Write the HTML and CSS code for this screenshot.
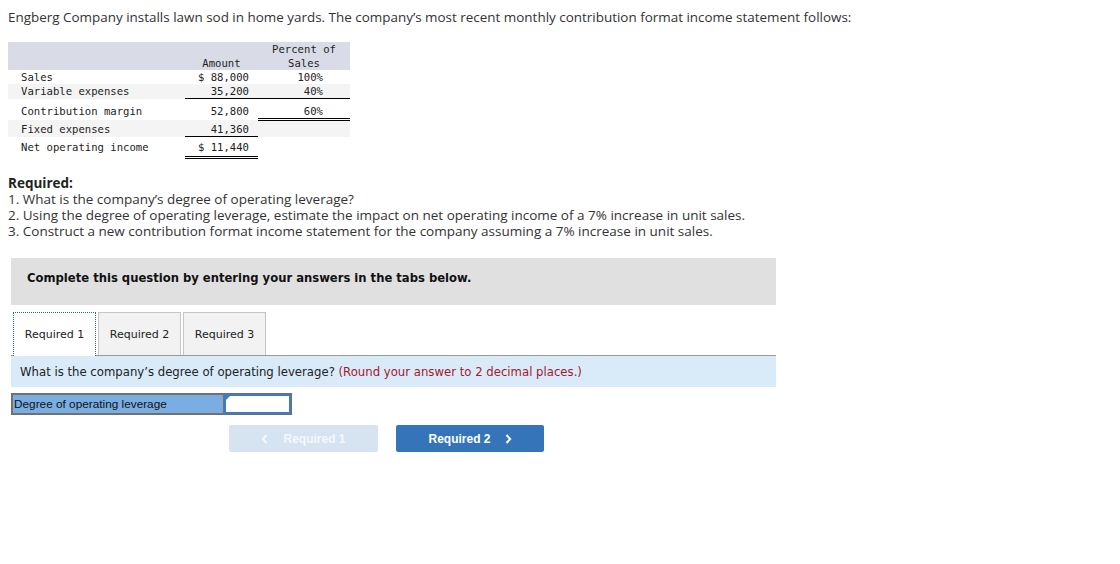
FILE: index.html
```html
<!DOCTYPE html>
<html>
<head>
<meta charset="utf-8">
<link rel="stylesheet" href="styles.css">
</head>
<body>
<p class="intro">Engberg Company installs lawn sod in home yards. The company’s most recent monthly contribution format income statement follows:</p>

<table class="stmt">
  <thead>
    <tr>
      <th class="c-label"></th>
      <th class="c-amt">Amount</th>
      <th class="c-pct">Percent of<br>Sales</th>
    </tr>
  </thead>
  <tbody>
    <tr class="r-sales">
      <td class="c-label">Sales</td>
      <td class="c-amt">$ 88,000</td>
      <td class="c-pct">100%</td>
    </tr>
    <tr class="r-var shade">
      <td class="c-label">Variable expenses</td>
      <td class="c-amt ul">35,200</td>
      <td class="c-pct ul">40%</td>
    </tr>
    <tr class="r-cm">
      <td class="c-label">Contribution margin</td>
      <td class="c-amt">52,800</td>
      <td class="c-pct dul">60%</td>
    </tr>
    <tr class="r-fixed shade">
      <td class="c-label">Fixed expenses</td>
      <td class="c-amt ul">41,360</td>
      <td class="c-pct"></td>
    </tr>
    <tr class="r-net">
      <td class="c-label">Net operating income</td>
      <td class="c-amt dul">$ 11,440</td>
      <td class="c-pct"></td>
    </tr>
  </tbody>
</table>

<div class="required">
  <div class="req-title">Required:</div>
  <div>1. What is the company’s degree of operating leverage?</div>
  <div>2. Using the degree of operating leverage, estimate the impact on net operating income of a 7% increase in unit sales.</div>
  <div>3. Construct a new contribution format income statement for the company assuming a 7% increase in unit sales.</div>
</div>

<div class="panel">
  <div class="banner">Complete this question by entering your answers in the tabs below.</div>

  <div class="tabs">
    <div class="tab active">Required 1</div>
    <div class="tab">Required 2</div>
    <div class="tab">Required 3</div>
  </div>

  <div class="question">What is the company’s degree of operating leverage? <span class="hint">(Round your answer to 2 decimal places.)</span></div>

  <div class="answer-row">
    <div class="answer-label">Degree of operating leverage</div>
    <div class="answer-input"><span class="marker"></span></div>
  </div>

  <div class="nav">
    <div class="btn btn-prev"><svg class="chev chev-l" width="7" height="10" viewBox="0 0 7 10"><path d="M5.5 1 L1.8 5 L5.5 9" fill="none" stroke="currentColor" stroke-width="2"/></svg>Required 1</div>
    <div class="btn btn-next">Required 2<svg class="chev chev-r" width="7" height="10" viewBox="0 0 7 10"><path d="M1.5 1 L5.2 5 L1.5 9" fill="none" stroke="currentColor" stroke-width="2"/></svg></div>
  </div>
</div>
</body>
</html>
```

FILE: styles.css
```css
html, body {
  margin: 0;
  padding: 0;
  background: #ffffff;
}

body {
  padding: 8px;
  font-family: "Open Sans", Lato, sans-serif;
  color: #333333;
}

.intro {
  margin: 0;
  font-size: 13.45px;
  line-height: 18px;
  color: #333333;
}

.stmt {
  margin-top: 16px;
  border-collapse: collapse;
  font-family: "DejaVu Sans Mono", "Liberation Mono", monospace;
  font-size: 10.6px;
  color: #222222;
}

.stmt thead tr {
  background: #d9dce6;
}

.stmt th {
  font-weight: normal;
  text-align: center;
  vertical-align: bottom;
  line-height: 14px;
  padding: 0;
  height: 28px;
}

.stmt td {
  padding: 0;
  line-height: 14px;
}

.c-label {
  width: 177px;
  box-sizing: border-box;
}

td.c-label {
  padding-left: 13px;
  text-align: left;
}

.c-amt {
  width: 73px;
  box-sizing: border-box;
}

td.c-amt {
  text-align: right;
  padding-right: 9px;
}

.c-pct {
  width: 92px;
  box-sizing: border-box;
}

td.c-pct {
  text-align: right;
  padding-right: 27px;
}

.shade {
  background: #f4f4f4;
}

.r-sales td { height: 14px; }
.r-var td { height: 14px; }
.r-cm td { height: 20px; vertical-align: top; padding-top: 5px; }
.r-fixed td { height: 17px; vertical-align: top; padding-top: 2px; }
.r-net td { height: 21px; vertical-align: top; padding-top: 3px; }

td.ul {
  border-bottom: 1px solid #000000;
}

td.dul {
  border-bottom: 3px double #000000;
}

.required {
  margin-top: 16px;
  font-size: 13.5px;
  line-height: 16px;
  color: #333333;
}

.req-title {
  font-weight: bold;
  color: #222222;
}

.panel {
  margin-top: 19px;
  margin-left: 3px;
  width: 765px;
}

.banner {
  background: #e0e0e0;
  height: 47px;
  box-sizing: border-box;
  padding-left: 16px;
  padding-top: 12px;
  line-height: 16px;
  font-family: "DejaVu Sans", Verdana, sans-serif;
  font-weight: bold;
  font-size: 11.6px;
  color: #111111;
}

.tabs {
  margin-top: 7px;
  display: flex;
  gap: 2px;
  padding-left: 2px;
  border-bottom: 1px solid #999999;
  height: 43px;
  box-sizing: content-box;
}

.tab {
  width: 83px;
  height: 43px;
  box-sizing: border-box;
  display: flex;
  align-items: center;
  justify-content: center;
  background: #f2f2f2;
  border: 1px solid #c6c6c6;
  border-bottom: none;
  font-family: "DejaVu Sans", Verdana, sans-serif;
  font-size: 11px;
  color: #222222;
}

.tab.active {
  background: #ffffff;
  border: 1px dotted #2a62b0;
  border-bottom: none;
  height: 44px;
  margin-bottom: -1px;
}

.question {
  background: #d9ebf9;
  height: 31px;
  box-sizing: border-box;
  padding-left: 9px;
  padding-top: 1px;
  display: flex;
  align-items: center;
  font-family: "DejaVu Sans", Verdana, sans-serif;
  font-size: 11.7px;
  color: #222222;
  white-space: pre;
}

.hint {
  color: #a5182d;
}

.answer-row {
  margin-top: 6px;
  display: flex;
  height: 22px;
}

.answer-label {
  width: 212px;
  box-sizing: border-box;
  background: #7aaee3;
  border: 2px solid #717171;
  border-right: none;
  display: flex;
  align-items: center;
  padding-left: 1px;
  font-family: "Liberation Sans", Arial, sans-serif;
  font-size: 11.8px;
  color: #111111;
}

.answer-input {
  width: 69px;
  box-sizing: border-box;
  background: #ffffff;
  border: 2px solid #717171;
  position: relative;
}

.answer-input::before {
  content: "";
  position: absolute;
  left: -1px;
  top: -1px;
  right: -1px;
  bottom: -1px;
  border: 2px solid #3d7cc4;
}

.marker {
  position: absolute;
  left: 1px;
  top: 1px;
  width: 0;
  height: 0;
  border-top: 4px solid #3d7cc4;
  border-right: 4px solid transparent;
}

.nav {
  margin-top: 10px;
  margin-left: 218px;
  display: flex;
  gap: 18px;
}

.btn {
  width: 149px;
  height: 27px;
  box-sizing: border-box;
  border-radius: 2px;
  display: flex;
  align-items: center;
  justify-content: center;
  font-family: "Liberation Sans", Arial, sans-serif;
  font-weight: bold;
  font-size: 12px;
  color: #ffffff;
}

.btn-prev {
  background: #d6e3f1;
  color: #f4f8fc;
}

.btn-next {
  background: #3674b9;
  width: 148px;
}

.chev-l {
  margin-right: 15px;
}

.chev-r {
  margin-left: 14px;
}
```
